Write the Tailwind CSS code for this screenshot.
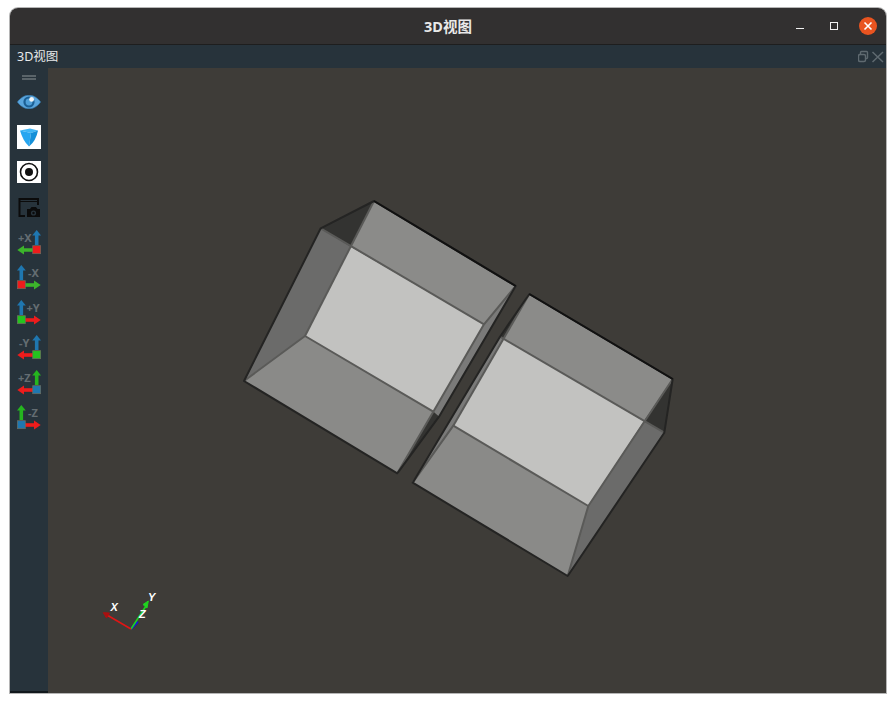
<!DOCTYPE html>
<html lang="zh">
<head>
<meta charset="utf-8">
<script src="https://cdn.jsdelivr.net/npm/@tailwindcss/browser@4"></script>
</head>
<body class="bg-white w-[896px] h-[703px] overflow-hidden font-['Noto_Sans','Noto_Sans_CJK_SC',sans-serif]">
<div class="pt-[8px] pl-[10px]">
  <div class="w-[876px] h-[685px] flex flex-col rounded-t-[8px] overflow-hidden shadow-[0_0_0_1px_#b5b5b5]">
    <header class="h-[37px] shrink-0 bg-[#323030] border-b border-[#1e1e1e] flex items-center relative">
      <div class="flex-1 text-center text-[14.5px] font-bold text-[#e8e8e8] pt-[2px]">3D视图</div>
      <div class="absolute right-0 top-0 h-full flex items-start">
        <svg width="90" height="36" viewBox="796 8 90 36">
          <path d="M796 28.5H804" stroke="#f2f2f2" stroke-width="1"/>
          <rect x="830.5" y="22.5" width="7" height="7" fill="none" stroke="#f2f2f2" stroke-width="1"/>
          <circle cx="868" cy="26" r="9" fill="#e95420"/>
          <path d="M864.5 22.5L871.5 29.5M871.5 22.5L864.5 29.5" stroke="#fff" stroke-width="1.6"/>
        </svg>
      </div>
    </header>
    <div class="h-[23px] shrink-0 bg-[#27333b] flex items-center justify-between">
      <span class="text-[12.5px] text-[#e6e9ea] pl-[7px] pt-[1px]">3D视图</span>
      <svg width="28" height="23" viewBox="858 45 28 23">
        <rect x="858.5" y="54.5" width="7" height="7" rx="1.5" fill="none" stroke="#5f6a70" stroke-width="1.4"/>
        <path d="M860.5 54V52.5Q860.5 51.5 861.5 51.5H866.5Q867.5 51.5 867.5 52.5V57.5Q867.5 58.5 866.5 58.5H865.5" fill="none" stroke="#5f6a70" stroke-width="1.4"/>
        <path d="M872.5 52L883 62M883 52L872.5 62" stroke="#5f6a70" stroke-width="1.5"/>
      </svg>
    </div>
    <div class="flex-1 flex min-h-0">
      <aside class="w-[38px] shrink-0 bg-[#27333b] flex flex-col items-center border-b-[2px] border-[#12181c]">
        <div class="h-[17px] w-full flex flex-col items-center pt-[7px] gap-[1px]">
          <div class="w-[14px] h-[2px] bg-[#5a6469]"></div>
          <div class="w-[14px] h-[2px] bg-[#5a6469]"></div>
        </div>
        <div class="h-[35px] flex items-start justify-center pt-[10px]">
          <svg width="24" height="14" viewBox="0 0 24 14">
            <path d="M0.3 7C4 2 8 0.2 12 0.2C16 0.2 20 2 23.7 7C20 12 16 13.8 12 13.8C8 13.8 4 12 0.3 7Z" fill="#5aa5dc" stroke="#2f6f9f" stroke-width="0.6"/>
            <circle cx="12" cy="7" r="5.6" fill="#1b5f94"/>
            <circle cx="12" cy="7" r="3.4" fill="#4f9fd8"/>
            <circle cx="14.6" cy="4.4" r="2.4" fill="#f2f6f8"/>
          </svg>
        </div>
        <div class="h-[35px] flex items-start justify-center pt-[5px]">
          <div class="w-[24px] h-[24px] bg-white flex items-center justify-center">
            <svg width="24" height="24" viewBox="0 0 24 24">
              <path d="M3 5.5L13 3.5L21 5.5L14 8Z" fill="#3fb6f5"/>
              <path d="M3 5.5L14 8L12 21.5Q6 16 3 5.5Z" fill="#27a6f0"/>
              <path d="M14 8L21 5.5Q19 16 12 21.5Z" fill="#1490d8"/>
            </svg>
          </div>
        </div>
        <div class="h-[35px] flex items-start justify-center pt-[6px]">
          <div class="w-[24px] h-[22px] bg-white flex items-center justify-center">
            <svg width="24" height="22" viewBox="0 0 24 22">
              <circle cx="12" cy="11" r="8.5" fill="none" stroke="#111" stroke-width="1.6"/>
              <circle cx="12" cy="11" r="4" fill="#111"/>
            </svg>
          </div>
        </div>
        <div class="h-[35px] flex items-start justify-center pt-[5px]">
          <svg width="24" height="24" viewBox="0 0 24 24">
            <path d="M2.5 17V4H21V10" fill="none" stroke="#0b0b0b" stroke-width="2"/>
            <path d="M2.5 17V21H8" fill="none" stroke="#0b0b0b" stroke-width="2"/>
            <path d="M3 6.5H21" stroke="#0b0b0b" stroke-width="1"/>
            <path d="M10 22V14H13L14.5 12H19L20.5 14H23V22Z" fill="#0b0b0b"/>
            <circle cx="16.5" cy="18" r="2.6" fill="#27333b"/>
            <circle cx="16.5" cy="18" r="1.2" fill="#0b0b0b"/>
          </svg>
        </div>

        <svg width="24" height="35" viewBox="0 0 24 35" class="shrink-0">
          <text x="1" y="17" font-size="11" font-weight="700" fill="#646d72">+X</text>
          <path d="M19.7 20V9" stroke="#1f77b0" stroke-width="3.6"/><path d="M15.2 10.5L19.7 5L24 10.5Z" fill="#1f77b0"/>
          <path d="M16 25H6" stroke="#3cb52b" stroke-width="3.6"/><path d="M7 20.5L0.3 25L7 29.5Z" fill="#3cb52b"/>
          <rect x="15.7" y="20.7" width="8" height="8" fill="#ee1c1c" stroke="#6d6d5e" stroke-width="0.7"/>
        </svg>
        <svg width="24" height="35" viewBox="0 0 24 35" class="shrink-0">
          <text x="11" y="17" font-size="11" font-weight="700" fill="#646d72">-X</text>
          <path d="M4.3 20V9" stroke="#1f77b0" stroke-width="3.6"/><path d="M0 10.5L4.3 5L8.8 10.5Z" fill="#1f77b0"/>
          <path d="M8 25H18" stroke="#3cb52b" stroke-width="3.6"/><path d="M17 20.5L23.7 25L17 29.5Z" fill="#3cb52b"/>
          <rect x="0.3" y="20.7" width="8" height="8" fill="#ee1c1c" stroke="#6d6d5e" stroke-width="0.7"/>
        </svg>
        <svg width="24" height="35" viewBox="0 0 24 35" class="shrink-0">
          <text x="9.5" y="17" font-size="11" font-weight="700" fill="#646d72">+Y</text>
          <path d="M4.3 20V9" stroke="#1f77b0" stroke-width="3.6"/><path d="M0 10.5L4.3 5L8.8 10.5Z" fill="#1f77b0"/>
          <path d="M8 25H18" stroke="#ee1c1c" stroke-width="3.6"/><path d="M17 20.5L23.7 25L17 29.5Z" fill="#ee1c1c"/>
          <rect x="0.3" y="20.7" width="8" height="8" fill="#25c41f" stroke="#6d6d5e" stroke-width="0.7"/>
        </svg>
        <svg width="24" height="35" viewBox="0 0 24 35" class="shrink-0">
          <text x="2" y="17" font-size="11" font-weight="700" fill="#646d72">-Y</text>
          <path d="M19.7 20V9" stroke="#1f77b0" stroke-width="3.6"/><path d="M15.2 10.5L19.7 5L24 10.5Z" fill="#1f77b0"/>
          <path d="M16 25H6" stroke="#ee1c1c" stroke-width="3.6"/><path d="M7 20.5L0.3 25L7 29.5Z" fill="#ee1c1c"/>
          <rect x="15.7" y="20.7" width="8" height="8" fill="#25c41f" stroke="#6d6d5e" stroke-width="0.7"/>
        </svg>
        <svg width="24" height="35" viewBox="0 0 24 35" class="shrink-0">
          <text x="1" y="17" font-size="11" font-weight="700" fill="#646d72">+Z</text>
          <path d="M19.7 20V9" stroke="#25b51f" stroke-width="3.6"/><path d="M15.2 10.5L19.7 5L24 10.5Z" fill="#25b51f"/>
          <path d="M16 25H6" stroke="#ee1c1c" stroke-width="3.6"/><path d="M7 20.5L0.3 25L7 29.5Z" fill="#ee1c1c"/>
          <rect x="15.7" y="20.7" width="8" height="8" fill="#1f77b0" stroke="#6d6d5e" stroke-width="0.7"/>
        </svg>
        <svg width="24" height="35" viewBox="0 0 24 35" class="shrink-0">
          <text x="11" y="17" font-size="11" font-weight="700" fill="#646d72">-Z</text>
          <path d="M4.3 20V9" stroke="#25b51f" stroke-width="3.6"/><path d="M0 10.5L4.3 5L8.8 10.5Z" fill="#25b51f"/>
          <path d="M8 25H18" stroke="#ee1c1c" stroke-width="3.6"/><path d="M17 20.5L23.7 25L17 29.5Z" fill="#ee1c1c"/>
          <rect x="0.3" y="20.7" width="8" height="8" fill="#1f77b0" stroke="#6d6d5e" stroke-width="0.7"/>
        </svg>
      </aside>
      <main class="flex-1 min-w-0 bg-[#3e3c38]">
        <svg class="block w-full h-full" viewBox="48 68 838 625" preserveAspectRatio="none">
          <!-- left box -->
          <g stroke-linejoin="round">
            <path d="M320.7 228.3L374 201L350.7 246.7Z" fill="#333331"/>
            <path d="M374 201L515.7 286L484 324.3L350.7 246.7Z" fill="#8b8b89"/>
            <path d="M320.7 228.3L350.7 246.7L305 336L244 381Z" fill="#6b6b6a"/>
            <path d="M244 381L305 336L433.3 411.7L397.3 473.3Z" fill="#8a8a88"/>
            <path d="M484 324.3L515.7 286L439 416.7L433.3 411.7Z" fill="#7a7a79"/>
            <path d="M433.3 411.7L439 416.7L397.3 473.3Z" fill="#333331"/>
            <path d="M350.7 246.7L484 324.3L433.3 411.7L305 336Z" fill="#c2c2c0"/>
            <g fill="none" stroke="#5a5a58" stroke-width="2">
              <path d="M320.7 228.3L484 324.3"/>
              <path d="M374 201L305 336"/>
              <path d="M244 381L305 336L433.3 411.7"/>
              <path d="M515.7 286L484 324.3L433.3 411.7L397.3 473.3"/>
            </g>
            <path d="M374 201L320.7 228.3L244 381L397.3 473.3L439 416.7L515.7 286Z" fill="none" stroke="#242423" stroke-width="2"/>
            <path d="M374 201L515.7 286" stroke="#111" stroke-width="2" fill="none"/>
          </g>
          <!-- right box -->
          <g stroke-linejoin="round">
            <path d="M529.3 294L672.7 379L644 421.3L504 338.3L500 336.7Z" fill="#8b8b89"/>
            <path d="M672.7 379L664.3 432.7L644 421.3Z" fill="#333331"/>
            <path d="M644 421.3L664.3 432.7L567.7 576L588.3 506Z" fill="#6b6b6a"/>
            <path d="M412.7 482.7L453.3 425.7L588.3 506L567.7 576Z" fill="#8a8a88"/>
            <path d="M412.7 482.7L500 336.7L504 338.3L453.3 425.7Z" fill="#7a7a79"/>
            <path d="M500 336.7L529.3 294L504 338.3Z" fill="#333331"/>
            <path d="M504 338.3L644 421.3L588.3 506L453.3 425.7Z" fill="#c2c2c0"/>
            <g fill="none" stroke="#5a5a58" stroke-width="2">
              <path d="M500 336.7L664.3 432.7"/>
              <path d="M672.7 379L588.3 506L567.7 576"/>
              <path d="M412.7 482.7L453.3 425.7L588.3 506"/>
              <path d="M529.3 294L453.3 425.7"/>
            </g>
            <path d="M529.3 294L672.7 379L664.3 432.7L567.7 576L412.7 482.7L500 336.7Z" fill="none" stroke="#242423" stroke-width="2"/>
            <path d="M529.3 294L672.7 379" stroke="#111" stroke-width="2" fill="none"/>
          </g>
          <!-- axes -->
          <path d="M131 629L137.7 621.7" stroke="#1515d8" stroke-width="2.5"/>
          <path d="M131 629L146 606" stroke="#1fd41f" stroke-width="1.6"/>
          <path d="M148.3 601L143 604.5L147 608Z" fill="#1fd41f" stroke="#1fd41f"/>
          <path d="M131 629L107 615" stroke="#e01515" stroke-width="1.6"/>
          <path d="M103.3 612.7L109.5 613L106.5 618Z" fill="#a81010" stroke="#a81010"/>
          <g fill="#fff" font-size="11" font-weight="600" font-style="italic" style="font-family:'Liberation Sans',sans-serif">
            <text x="110.5" y="611">X</text>
            <text x="148" y="601">Y</text>
            <text x="139" y="618">Z</text>
          </g>
        </svg>
      </main>
    </div>
  </div>
</div>
</body>
</html>
